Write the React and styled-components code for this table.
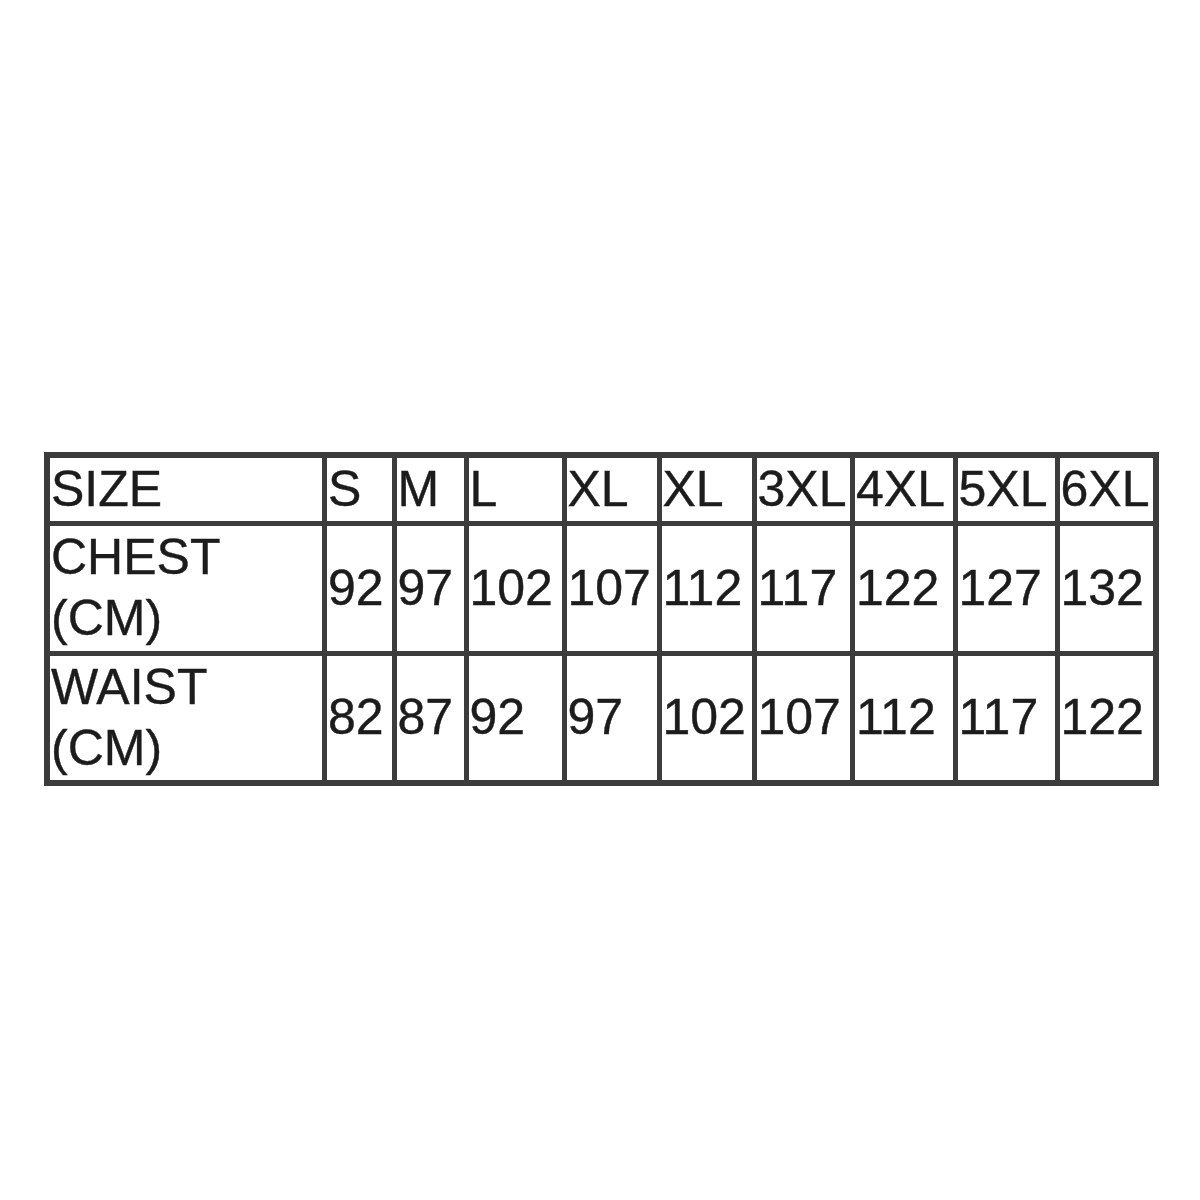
import React from "react";
import styled, { createGlobalStyle } from "styled-components";

const Global = createGlobalStyle`
  html, body { margin: 0; padding: 0; background: #ffffff; }
  body { font-family: "Liberation Sans", Arial, sans-serif; }
`;

const Page = styled.div`
  width: 1200px;
  height: 1200px;
  box-sizing: border-box;
  padding: 452px 0 0 44px;
  background: #ffffff;
`;

const Grid = styled.div`
  display: inline-grid;
  grid-template-columns: 272px 64.5px 67px 93px 90px 90px 93.5px 97.5px 97px 93px;
  grid-template-rows: 62.5px 125px 124.5px;
  gap: 5px;
  padding: 6px;
  background: #3c3c3c;
`;

const Cell = styled.div`
  background: #ffffff;
  display: flex;
  align-items: center;
  padding-left: 1px;
  font-size: 50px;
  line-height: 61px;
  color: #1c1c1c;
  -webkit-text-stroke: 0.4px #1c1c1c;
  white-space: nowrap;
  overflow: hidden;
`;

const Label = styled.div`
  display: flex;
  flex-direction: column;
`;

const header = ["S", "M", "L", "XL", "XL", "3XL", "4XL", "5XL", "6XL"];
const rows = [
  { label: ["CHEST", "(CM)"], values: [92, 97, 102, 107, 112, 117, 122, 127, 132] },
  { label: ["WAIST", "(CM)"], values: [82, 87, 92, 97, 102, 107, 112, 117, 122] },
];

export default function App() {
  return (
    <>
      <Global />
      <Page>
        <Grid>
          <Cell>SIZE</Cell>
          {header.map((h, i) => (
            <Cell key={"h" + i}>{h}</Cell>
          ))}
          {rows.map((r, ri) => (
            <React.Fragment key={ri}>
              <Cell>
                <Label>
                  {r.label.map((l) => (
                    <span key={l}>{l}</span>
                  ))}
                </Label>
              </Cell>
              {r.values.map((v, vi) => (
                <Cell key={vi}>{v}</Cell>
              ))}
            </React.Fragment>
          ))}
        </Grid>
      </Page>
    </>
  );
}
